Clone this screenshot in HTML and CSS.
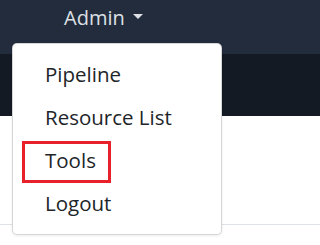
FILE: index.html
```html
<!DOCTYPE html>
<html>
<head>
<meta charset="utf-8">
<link rel="stylesheet" href="styles.css">
</head>
<body>
<nav class="navbar">
  <a class="nav-link">Admin<span class="caret"></span></a>
</nav>
<div class="subbar"></div>
<div class="content">
  <div class="rule"></div>
</div>
<div class="dropdown-menu">
  <a class="dropdown-item">Pipeline</a>
  <a class="dropdown-item">Resource List</a>
  <a class="dropdown-item highlighted">Tools<span class="annot"></span></a>
  <a class="dropdown-item">Logout</a>
</div>
</body>
</html>
```
FILE: styles.css
```css
html, body {
  margin: 0;
  padding: 0;
  background: #ffffff;
  font-family: "Open Sans", "Noto Sans", sans-serif;
  overflow: hidden;
}
.navbar {
  height: 54px;
  background: #222c3c;
  display: flex;
  align-items: flex-start;
  padding-left: 64px;
  box-sizing: border-box;
}
.nav-link {
  color: #dde0e5;
  font-size: 20px;
  line-height: 28px;
  padding-top: 4px;
  display: flex;
  align-items: center;
}
.caret {
  display: inline-block;
  margin-left: 8px;
  margin-top: -3px;
  width: 0;
  height: 0;
  border-top: 5px solid #dde0e5;
  border-left: 5px solid transparent;
  border-right: 5px solid transparent;
}
.subbar {
  height: 62px;
  background: #131a24;
}
.content {
  height: 129px;
  display: flex;
  flex-direction: column;
  justify-content: flex-end;
}
.rule {
  height: 1px;
  background: #dee2e6;
  margin-bottom: 20px;
}
.dropdown-menu {
  position: absolute;
  left: 12px;
  top: 43px;
  width: 210px;
  box-sizing: border-box;
  background: #ffffff;
  border: 1px solid rgba(0, 0, 0, 0.16);
  border-radius: 5px;
  padding: 8.5px 0 9.5px;
  display: flex;
  flex-direction: column;
  box-shadow: 0 1px 3px rgba(0, 0, 0, 0.08);
}
.dropdown-item {
  position: relative;
  display: block;
  color: #212529;
  font-size: 20.5px;
  line-height: 32px;
  padding: 5.5px 32px;
  white-space: nowrap;
}
.annot {
  position: absolute;
  left: 9px;
  top: 2.5px;
  width: 89px;
  height: 42px;
  box-sizing: border-box;
  border: 3px solid #e8202a;
}
```
